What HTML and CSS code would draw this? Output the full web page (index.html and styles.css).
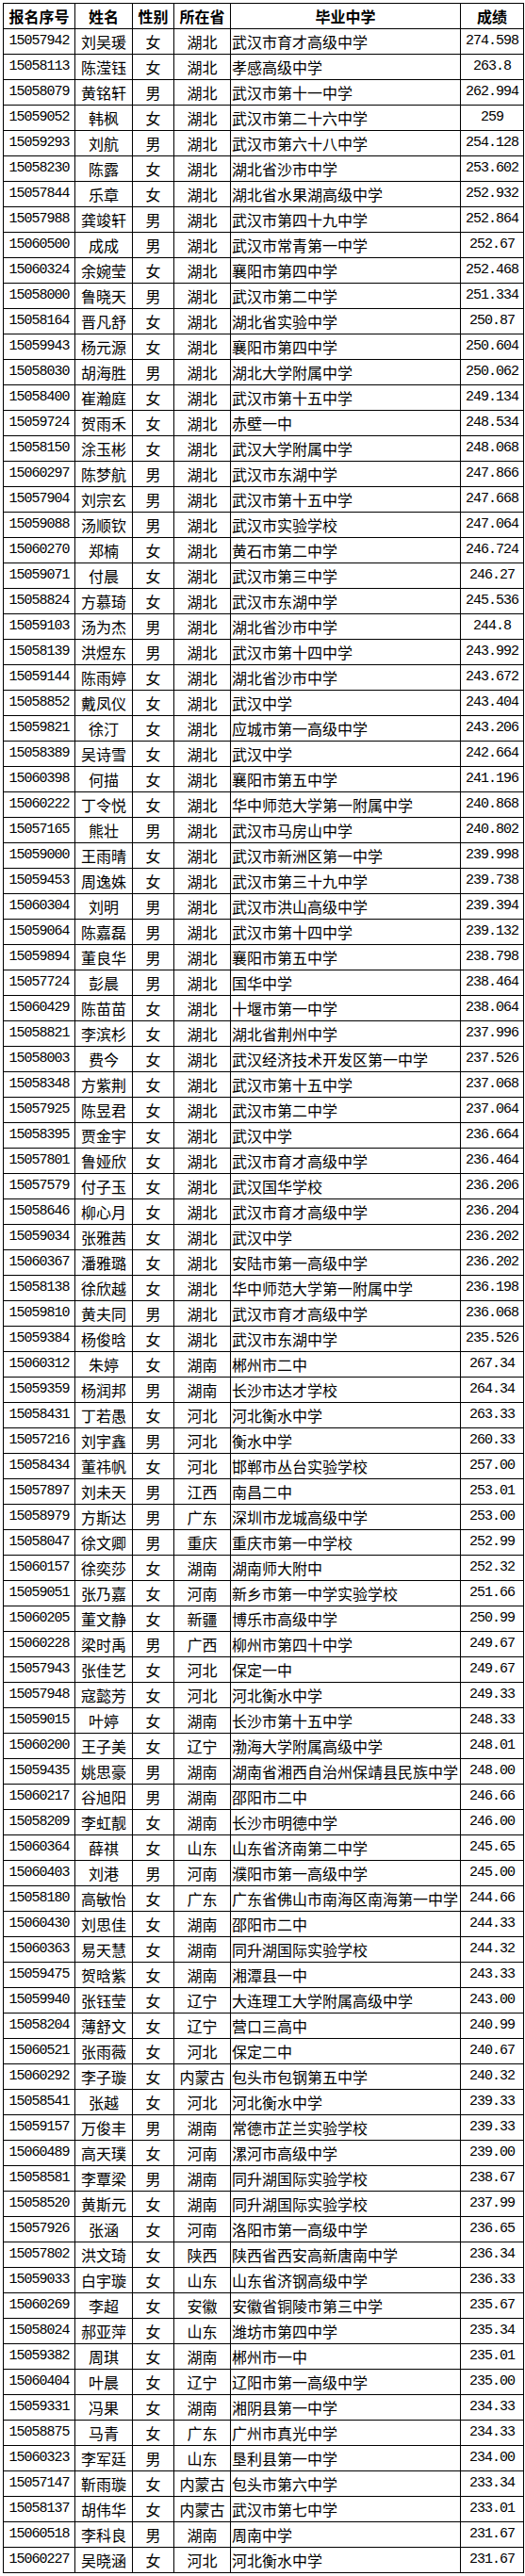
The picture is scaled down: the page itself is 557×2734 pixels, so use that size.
FILE: index.html
```html
<!DOCTYPE html>
<html lang="zh-CN">
<head>
<meta charset="utf-8">
<title>成绩名单</title>
<link rel="stylesheet" href="styles.css">
</head>
<body>
<table class="roster">
<colgroup>
<col class="c-id"><col class="c-name"><col class="c-sex"><col class="c-prov"><col class="c-school"><col class="c-score">
</colgroup>
<thead>
<tr><th>报名序号</th><th>姓名</th><th>性别</th><th>所在省</th><th>毕业中学</th><th>成绩</th></tr>
</thead>
<tbody>
<tr><td class="num">15057942</td><td>刘吴瑗</td><td>女</td><td>湖北</td><td class="school">武汉市育才高级中学</td><td class="num">274.598</td></tr>
<tr><td class="num">15058113</td><td>陈滢钰</td><td>女</td><td>湖北</td><td class="school">孝感高级中学</td><td class="num">263.8</td></tr>
<tr><td class="num">15058079</td><td>黄铭轩</td><td>男</td><td>湖北</td><td class="school">武汉市第十一中学</td><td class="num">262.994</td></tr>
<tr><td class="num">15059052</td><td>韩枫</td><td>女</td><td>湖北</td><td class="school">武汉市第二十六中学</td><td class="num">259</td></tr>
<tr><td class="num">15059293</td><td>刘航</td><td>男</td><td>湖北</td><td class="school">武汉市第六十八中学</td><td class="num">254.128</td></tr>
<tr><td class="num">15058230</td><td>陈露</td><td>女</td><td>湖北</td><td class="school">湖北省沙市中学</td><td class="num">253.602</td></tr>
<tr><td class="num">15057844</td><td>乐章</td><td>女</td><td>湖北</td><td class="school">湖北省水果湖高级中学</td><td class="num">252.932</td></tr>
<tr><td class="num">15057988</td><td>龚竣轩</td><td>男</td><td>湖北</td><td class="school">武汉市第四十九中学</td><td class="num">252.864</td></tr>
<tr><td class="num">15060500</td><td>成成</td><td>男</td><td>湖北</td><td class="school">武汉市常青第一中学</td><td class="num">252.67</td></tr>
<tr><td class="num">15060324</td><td>余婉莹</td><td>女</td><td>湖北</td><td class="school">襄阳市第四中学</td><td class="num">252.468</td></tr>
<tr><td class="num">15058000</td><td>鲁晓天</td><td>男</td><td>湖北</td><td class="school">武汉市第二中学</td><td class="num">251.334</td></tr>
<tr><td class="num">15058164</td><td>晋凡舒</td><td>女</td><td>湖北</td><td class="school">湖北省实验中学</td><td class="num">250.87</td></tr>
<tr><td class="num">15059943</td><td>杨元源</td><td>女</td><td>湖北</td><td class="school">襄阳市第四中学</td><td class="num">250.604</td></tr>
<tr><td class="num">15058030</td><td>胡海胜</td><td>男</td><td>湖北</td><td class="school">湖北大学附属中学</td><td class="num">250.062</td></tr>
<tr><td class="num">15058400</td><td>崔瀚庭</td><td>女</td><td>湖北</td><td class="school">武汉市第十五中学</td><td class="num">249.134</td></tr>
<tr><td class="num">15059724</td><td>贺雨禾</td><td>女</td><td>湖北</td><td class="school">赤壁一中</td><td class="num">248.534</td></tr>
<tr><td class="num">15058150</td><td>涂玉彬</td><td>女</td><td>湖北</td><td class="school">武汉大学附属中学</td><td class="num">248.068</td></tr>
<tr><td class="num">15060297</td><td>陈梦航</td><td>男</td><td>湖北</td><td class="school">武汉市东湖中学</td><td class="num">247.866</td></tr>
<tr><td class="num">15057904</td><td>刘宗玄</td><td>男</td><td>湖北</td><td class="school">武汉市第十五中学</td><td class="num">247.668</td></tr>
<tr><td class="num">15059088</td><td>汤顺钦</td><td>男</td><td>湖北</td><td class="school">武汉市实验学校</td><td class="num">247.064</td></tr>
<tr><td class="num">15060270</td><td>郑楠</td><td>女</td><td>湖北</td><td class="school">黄石市第二中学</td><td class="num">246.724</td></tr>
<tr><td class="num">15059071</td><td>付晨</td><td>女</td><td>湖北</td><td class="school">武汉市第三中学</td><td class="num">246.27</td></tr>
<tr><td class="num">15058824</td><td>方慕琦</td><td>女</td><td>湖北</td><td class="school">武汉市东湖中学</td><td class="num">245.536</td></tr>
<tr><td class="num">15059103</td><td>汤为杰</td><td>男</td><td>湖北</td><td class="school">湖北省沙市中学</td><td class="num">244.8</td></tr>
<tr><td class="num">15058139</td><td>洪煜东</td><td>男</td><td>湖北</td><td class="school">武汉市第十四中学</td><td class="num">243.992</td></tr>
<tr><td class="num">15059144</td><td>陈雨婷</td><td>女</td><td>湖北</td><td class="school">湖北省沙市中学</td><td class="num">243.672</td></tr>
<tr><td class="num">15058852</td><td>戴凤仪</td><td>女</td><td>湖北</td><td class="school">武汉中学</td><td class="num">243.404</td></tr>
<tr><td class="num">15059821</td><td>徐汀</td><td>女</td><td>湖北</td><td class="school">应城市第一高级中学</td><td class="num">243.206</td></tr>
<tr><td class="num">15058389</td><td>吴诗雪</td><td>女</td><td>湖北</td><td class="school">武汉中学</td><td class="num">242.664</td></tr>
<tr><td class="num">15060398</td><td>何描</td><td>女</td><td>湖北</td><td class="school">襄阳市第五中学</td><td class="num">241.196</td></tr>
<tr><td class="num">15060222</td><td>丁令悦</td><td>女</td><td>湖北</td><td class="school">华中师范大学第一附属中学</td><td class="num">240.868</td></tr>
<tr><td class="num">15057165</td><td>熊壮</td><td>男</td><td>湖北</td><td class="school">武汉市马房山中学</td><td class="num">240.802</td></tr>
<tr><td class="num">15059000</td><td>王雨晴</td><td>女</td><td>湖北</td><td class="school">武汉市新洲区第一中学</td><td class="num">239.998</td></tr>
<tr><td class="num">15059453</td><td>周逸姝</td><td>女</td><td>湖北</td><td class="school">武汉市第三十九中学</td><td class="num">239.738</td></tr>
<tr><td class="num">15060304</td><td>刘明</td><td>男</td><td>湖北</td><td class="school">武汉市洪山高级中学</td><td class="num">239.394</td></tr>
<tr><td class="num">15059064</td><td>陈嘉磊</td><td>男</td><td>湖北</td><td class="school">武汉市第十四中学</td><td class="num">239.132</td></tr>
<tr><td class="num">15059894</td><td>董良华</td><td>男</td><td>湖北</td><td class="school">襄阳市第五中学</td><td class="num">238.798</td></tr>
<tr><td class="num">15057724</td><td>彭晨</td><td>男</td><td>湖北</td><td class="school">国华中学</td><td class="num">238.464</td></tr>
<tr><td class="num">15060429</td><td>陈苗苗</td><td>女</td><td>湖北</td><td class="school">十堰市第一中学</td><td class="num">238.064</td></tr>
<tr><td class="num">15058821</td><td>李滨杉</td><td>女</td><td>湖北</td><td class="school">湖北省荆州中学</td><td class="num">237.996</td></tr>
<tr><td class="num">15058003</td><td>费今</td><td>女</td><td>湖北</td><td class="school">武汉经济技术开发区第一中学</td><td class="num">237.526</td></tr>
<tr><td class="num">15058348</td><td>方紫荆</td><td>女</td><td>湖北</td><td class="school">武汉市第十五中学</td><td class="num">237.068</td></tr>
<tr><td class="num">15057925</td><td>陈昱君</td><td>女</td><td>湖北</td><td class="school">武汉市第二中学</td><td class="num">237.064</td></tr>
<tr><td class="num">15058395</td><td>贾金宇</td><td>女</td><td>湖北</td><td class="school">武汉中学</td><td class="num">236.664</td></tr>
<tr><td class="num">15057801</td><td>鲁娅欣</td><td>女</td><td>湖北</td><td class="school">武汉市育才高级中学</td><td class="num">236.464</td></tr>
<tr><td class="num">15057579</td><td>付子玉</td><td>女</td><td>湖北</td><td class="school">武汉国华学校</td><td class="num">236.206</td></tr>
<tr><td class="num">15058646</td><td>柳心月</td><td>女</td><td>湖北</td><td class="school">武汉市育才高级中学</td><td class="num">236.204</td></tr>
<tr><td class="num">15059034</td><td>张雅茜</td><td>女</td><td>湖北</td><td class="school">武汉中学</td><td class="num">236.202</td></tr>
<tr><td class="num">15060367</td><td>潘雅璐</td><td>女</td><td>湖北</td><td class="school">安陆市第一高级中学</td><td class="num">236.202</td></tr>
<tr><td class="num">15058138</td><td>徐欣越</td><td>女</td><td>湖北</td><td class="school">华中师范大学第一附属中学</td><td class="num">236.198</td></tr>
<tr><td class="num">15059810</td><td>黄夫同</td><td>男</td><td>湖北</td><td class="school">武汉市育才高级中学</td><td class="num">236.068</td></tr>
<tr><td class="num">15059384</td><td>杨俊晗</td><td>女</td><td>湖北</td><td class="school">武汉市东湖中学</td><td class="num">235.526</td></tr>
<tr><td class="num">15060312</td><td>朱婷</td><td>女</td><td>湖南</td><td class="school">郴州市二中</td><td class="num">267.34</td></tr>
<tr><td class="num">15059359</td><td>杨润邦</td><td>男</td><td>湖南</td><td class="school">长沙市达才学校</td><td class="num">264.34</td></tr>
<tr><td class="num">15058431</td><td>丁若愚</td><td>女</td><td>河北</td><td class="school">河北衡水中学</td><td class="num">263.33</td></tr>
<tr><td class="num">15057216</td><td>刘宇鑫</td><td>男</td><td>河北</td><td class="school">衡水中学</td><td class="num">260.33</td></tr>
<tr><td class="num">15058434</td><td>董祎帆</td><td>女</td><td>河北</td><td class="school">邯郸市丛台实验学校</td><td class="num">257.00</td></tr>
<tr><td class="num">15057897</td><td>刘未天</td><td>男</td><td>江西</td><td class="school">南昌二中</td><td class="num">253.01</td></tr>
<tr><td class="num">15058979</td><td>方斯达</td><td>男</td><td>广东</td><td class="school">深圳市龙城高级中学</td><td class="num">253.00</td></tr>
<tr><td class="num">15058047</td><td>徐文卿</td><td>男</td><td>重庆</td><td class="school">重庆市第一中学校</td><td class="num">252.99</td></tr>
<tr><td class="num">15060157</td><td>徐奕莎</td><td>女</td><td>湖南</td><td class="school">湖南师大附中</td><td class="num">252.32</td></tr>
<tr><td class="num">15059051</td><td>张乃嘉</td><td>女</td><td>河南</td><td class="school">新乡市第一中学实验学校</td><td class="num">251.66</td></tr>
<tr><td class="num">15060205</td><td>董文静</td><td>女</td><td>新疆</td><td class="school">博乐市高级中学</td><td class="num">250.99</td></tr>
<tr><td class="num">15060228</td><td>梁时禹</td><td>男</td><td>广西</td><td class="school">柳州市第四十中学</td><td class="num">249.67</td></tr>
<tr><td class="num">15057943</td><td>张佳艺</td><td>女</td><td>河北</td><td class="school">保定一中</td><td class="num">249.67</td></tr>
<tr><td class="num">15057948</td><td>寇懿芳</td><td>女</td><td>河北</td><td class="school">河北衡水中学</td><td class="num">249.33</td></tr>
<tr><td class="num">15059015</td><td>叶婷</td><td>女</td><td>湖南</td><td class="school">长沙市第十五中学</td><td class="num">248.33</td></tr>
<tr><td class="num">15060200</td><td>王子美</td><td>女</td><td>辽宁</td><td class="school">渤海大学附属高级中学</td><td class="num">248.01</td></tr>
<tr><td class="num">15059435</td><td>姚思豪</td><td>男</td><td>湖南</td><td class="school">湖南省湘西自治州保靖县民族中学</td><td class="num">248.00</td></tr>
<tr><td class="num">15060217</td><td>谷旭阳</td><td>男</td><td>湖南</td><td class="school">邵阳市二中</td><td class="num">246.66</td></tr>
<tr><td class="num">15058209</td><td>李虹靓</td><td>女</td><td>湖南</td><td class="school">长沙市明德中学</td><td class="num">246.00</td></tr>
<tr><td class="num">15060364</td><td>薛祺</td><td>女</td><td>山东</td><td class="school">山东省济南第二中学</td><td class="num">245.65</td></tr>
<tr><td class="num">15060403</td><td>刘港</td><td>男</td><td>河南</td><td class="school">濮阳市第一高级中学</td><td class="num">245.00</td></tr>
<tr><td class="num">15058180</td><td>高敏怡</td><td>女</td><td>广东</td><td class="school">广东省佛山市南海区南海第一中学</td><td class="num">244.66</td></tr>
<tr><td class="num">15060430</td><td>刘思佳</td><td>女</td><td>湖南</td><td class="school">邵阳市二中</td><td class="num">244.33</td></tr>
<tr><td class="num">15060363</td><td>易天慧</td><td>女</td><td>湖南</td><td class="school">同升湖国际实验学校</td><td class="num">244.32</td></tr>
<tr><td class="num">15059475</td><td>贺晗紫</td><td>女</td><td>湖南</td><td class="school">湘潭县一中</td><td class="num">243.33</td></tr>
<tr><td class="num">15059940</td><td>张钰莹</td><td>女</td><td>辽宁</td><td class="school">大连理工大学附属高级中学</td><td class="num">243.00</td></tr>
<tr><td class="num">15058204</td><td>薄舒文</td><td>女</td><td>辽宁</td><td class="school">营口三高中</td><td class="num">240.99</td></tr>
<tr><td class="num">15060521</td><td>张雨薇</td><td>女</td><td>河北</td><td class="school">保定二中</td><td class="num">240.67</td></tr>
<tr><td class="num">15060292</td><td>李子璇</td><td>女</td><td>内蒙古</td><td class="school">包头市包钢第五中学</td><td class="num">240.32</td></tr>
<tr><td class="num">15058541</td><td>张越</td><td>女</td><td>河北</td><td class="school">河北衡水中学</td><td class="num">239.33</td></tr>
<tr><td class="num">15059157</td><td>万俊丰</td><td>男</td><td>湖南</td><td class="school">常德市芷兰实验学校</td><td class="num">239.33</td></tr>
<tr><td class="num">15060489</td><td>高天璞</td><td>女</td><td>河南</td><td class="school">漯河市高级中学</td><td class="num">239.00</td></tr>
<tr><td class="num">15058581</td><td>李覃梁</td><td>男</td><td>湖南</td><td class="school">同升湖国际实验学校</td><td class="num">238.67</td></tr>
<tr><td class="num">15058520</td><td>黄斯元</td><td>女</td><td>湖南</td><td class="school">同升湖国际实验学校</td><td class="num">237.99</td></tr>
<tr><td class="num">15057926</td><td>张涵</td><td>女</td><td>河南</td><td class="school">洛阳市第一高级中学</td><td class="num">236.65</td></tr>
<tr><td class="num">15057802</td><td>洪文琦</td><td>女</td><td>陕西</td><td class="school">陕西省西安高新唐南中学</td><td class="num">236.34</td></tr>
<tr><td class="num">15059033</td><td>白宇璇</td><td>女</td><td>山东</td><td class="school">山东省济钢高级中学</td><td class="num">236.33</td></tr>
<tr><td class="num">15060269</td><td>李超</td><td>女</td><td>安徽</td><td class="school">安徽省铜陵市第三中学</td><td class="num">235.67</td></tr>
<tr><td class="num">15058024</td><td>郝亚萍</td><td>女</td><td>山东</td><td class="school">潍坊市第四中学</td><td class="num">235.34</td></tr>
<tr><td class="num">15059382</td><td>周琪</td><td>女</td><td>湖南</td><td class="school">郴州市一中</td><td class="num">235.01</td></tr>
<tr><td class="num">15060404</td><td>叶晨</td><td>女</td><td>辽宁</td><td class="school">辽阳市第一高级中学</td><td class="num">235.00</td></tr>
<tr><td class="num">15059331</td><td>冯果</td><td>女</td><td>湖南</td><td class="school">湘阴县第一中学</td><td class="num">234.33</td></tr>
<tr><td class="num">15058875</td><td>马青</td><td>女</td><td>广东</td><td class="school">广州市真光中学</td><td class="num">234.33</td></tr>
<tr><td class="num">15060323</td><td>李军廷</td><td>男</td><td>山东</td><td class="school">垦利县第一中学</td><td class="num">234.00</td></tr>
<tr><td class="num">15057147</td><td>靳雨璇</td><td>女</td><td>内蒙古</td><td class="school">包头市第六中学</td><td class="num">233.34</td></tr>
<tr><td class="num">15058137</td><td>胡伟华</td><td>女</td><td>内蒙古</td><td class="school">武汉市第七中学</td><td class="num">233.01</td></tr>
<tr><td class="num">15060518</td><td>李科良</td><td>男</td><td>湖南</td><td class="school">周南中学</td><td class="num">231.67</td></tr>
<tr><td class="num">15060227</td><td>吴晓涵</td><td>女</td><td>河北</td><td class="school">河北衡水中学</td><td class="num">231.67</td></tr>
</tbody>
</table>
</body>
</html>
```
FILE: styles.css
```css
html, body {
  margin: 0;
  padding: 0;
  background: #ffffff;
}

.roster {
  border-collapse: collapse;
  table-layout: fixed;
  width: 552px;
  margin: 3px 0 0 3px;
  font-family: "Noto Sans CJK SC", "Noto Sans", sans-serif;
  font-size: 16px;
  color: #000000;
}

.c-id { width: 76px; }
.c-name { width: 61px; }
.c-sex { width: 44px; }
.c-prov { width: 60px; }
.c-school { width: 244px; }
.c-score { width: 67px; }

.roster th,
.roster td {
  border: 1px solid #000000;
  padding: 0;
  height: 26px;
  line-height: 26px;
  text-align: center;
  white-space: nowrap;
  overflow: hidden;
  font-weight: normal;
}

.roster th {
  font-weight: bold;
}

.roster td.num {
  font-family: "Liberation Mono", "DejaVu Sans Mono", monospace;
  font-size: 15px;
  letter-spacing: -1px;
}

.roster td.school {
  text-align: left;
  padding-left: 1px;
}
```
